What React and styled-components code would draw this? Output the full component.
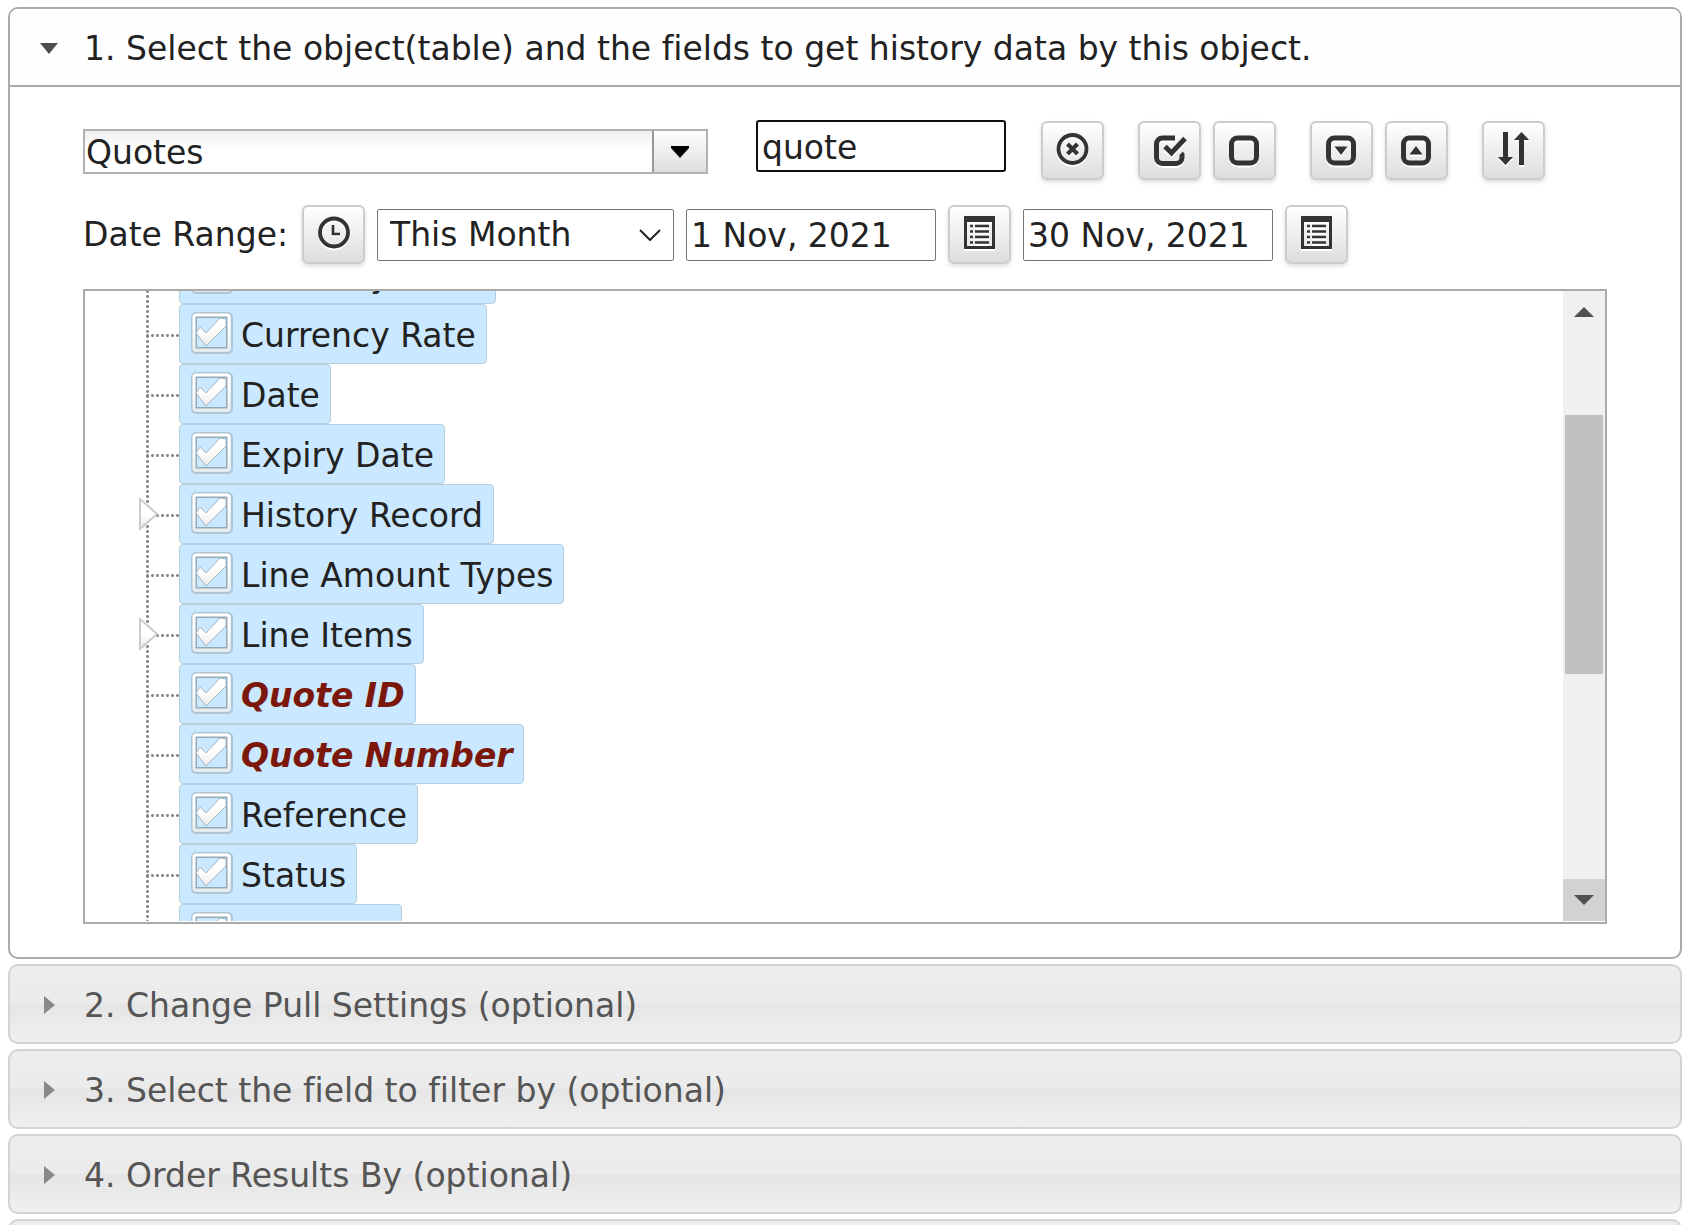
import { useLayoutEffect, useRef, useState } from "react";
import styled, { createGlobalStyle } from "styled-components";

const fields = [
  { label: "Currency Code" },
  { label: "Currency Rate" },
  { label: "Date" },
  { label: "Expiry Date" },
  { label: "History Record", nested: true },
  { label: "Line Amount Types" },
  { label: "Line Items", nested: true },
  { label: "Quote ID", isKey: true },
  { label: "Quote Number", isKey: true },
  { label: "Reference" },
  { label: "Status" },
  { label: "Sub Total" },
];

const closedSections = [
  "2. Change Pull Settings (optional)",
  "3. Select the field to filter by (optional)",
  "4. Order Results By (optional)",
  "5. Limit Results (optional)",
];

function ClearIcon() {
  return (
    <Icon viewBox="0 0 32 36">
      <circle cx="15.500" cy="16" r="14" fill="none" stroke="currentColor" strokeWidth="3.800" />
      <path d="M10.500 11l10 10M20.500 11l-10 10" stroke="currentColor" strokeWidth="4" />
    </Icon>
  );
}

function CheckAllIcon() {
  return (
    <Icon viewBox="0 0 32 36">
      <path
        d="M21 5H8.500a6 6 0 0 0-6 6v13.500a6 6 0 0 0 6 6H22a6 6 0 0 0 6-6v-3l-1-1"
        fill="none"
        stroke="currentColor"
        strokeWidth="5"
      />
      <path d="M11 13.500l6.500 6.500L31 5.500" fill="none" stroke="currentColor" strokeWidth="5" />
    </Icon>
  );
}

function BoxIcon({ arrow }) {
  return (
    <Icon viewBox="0 0 32 36">
      <rect x="2.500" y="5" width="25" height="25" rx="6" fill="none" stroke="currentColor" strokeWidth="5" />
      {arrow === "down" && <path d="M8.500 13.500h13L15 22z" fill="currentColor" />}
      {arrow === "up" && <path d="M8.500 21.500h13L15 13z" fill="currentColor" />}
    </Icon>
  );
}

function SortIcon() {
  return (
    <Icon viewBox="0 0 32 36">
      <path d="M5 -1h5v25h5l-7.500 8L0 24h5zM21 32h5V7h5l-7.500-8L16 7h5z" fill="currentColor" />
    </Icon>
  );
}

function ClockIcon() {
  return (
    <Icon viewBox="0 0 32 36">
      <circle cx="16" cy="15.500" r="14" fill="none" stroke="currentColor" strokeWidth="3.800" />
      <path d="M15 8v9h7" fill="none" stroke="currentColor" strokeWidth="2.600" />
    </Icon>
  );
}

function ListIcon() {
  return (
    <Icon viewBox="0 0 32 36">
      <path d="M0 -1h31v33H0zM3 5v24h25V5z" fill="currentColor" fillRule="evenodd" />
      <path d="M11 9h14M11 14.500h14M11 20h14M11 25.500h14" stroke="currentColor" strokeWidth="2.600" />
      <path d="M6 9h3M6 14.500h3M6 20h3M6 25.500h3" stroke="currentColor" strokeWidth="2.600" />
    </Icon>
  );
}

function Tick() {
  return (
    <TickArt viewBox="0 0 42 42" aria-hidden="true">
      <defs>
        <linearGradient id="tick" x1="0" y1="0" x2="0" y2="1">
          <stop offset="0.4" stopColor="#fff" />
          <stop offset="1" stopColor="#ececec" />
        </linearGradient>
      </defs>
      <rect x="1" y="1" width="40" height="40" rx="4" fill="none" stroke="#b0c4d2" strokeWidth="2" />
      <rect x="5" y="5" width="31" height="31" fill="none" stroke="#93a9b8" strokeWidth="2" />
      <rect x="3" y="3" width="35" height="35" rx="2" fill="none" stroke="url(#tick)" strokeWidth="3" />
      <path
        d="M5 21l4-6 6 6L29 6l6 1v7L15 34z"
        fill="url(#tick)"
        stroke="#a3b6c3"
        strokeWidth="1"
      />
    </TickArt>
  );
}

function Field({ label, nested, isKey }) {
  const [checked, setChecked] = useState(true);

  return (
    <Row>
      <Branch>
        {nested && (
          <Expander type="button" aria-label={`Expand ${label}`}>
            <svg width="22" height="34" viewBox="0 0 22 34">
              <defs>
                <linearGradient id="expander" x1="0" y1="0" x2="0" y2="1">
                  <stop offset="0.5" stopColor="#fff" />
                  <stop offset="1" stopColor="#e6e6e6" />
                </linearGradient>
              </defs>
              <path d="M2 2l17 15L2 32z" fill="url(#expander)" stroke="#ccc" strokeWidth="2" />
            </svg>
          </Expander>
        )}
      </Branch>
      <FieldLabel $isKey={isKey}>
        <TickBox>
          <input type="checkbox" checked={checked} onChange={() => setChecked(!checked)} />
          <Tick />
        </TickBox>
        <FieldName>{label}</FieldName>
      </FieldLabel>
    </Row>
  );
}

function FieldTree() {
  const viewport = useRef(null);

  // open with the first row mostly scrolled away
  useLayoutEffect(() => {
    viewport.current.scrollTop = 47;
  }, []);

  return (
    <TreeFrame>
      <TreeViewport ref={viewport}>
        <TreeList>
          {fields.map((field) => (
            <Field key={field.label} {...field} />
          ))}
        </TreeList>
      </TreeViewport>
      <ScrollBar>
        <ScrollButton type="button" aria-label="Scroll up">
          <svg width="20" height="10" viewBox="0 0 20 10">
            <path d="M0 10L10 0l10 10z" fill="#505050" />
          </svg>
        </ScrollButton>
        <ScrollTrack>
          <ScrollThumb />
        </ScrollTrack>
        <ScrollButton type="button" aria-label="Scroll down" $pressed>
          <svg width="20" height="10" viewBox="0 0 20 10">
            <path d="M0 0l10 10L20 0z" fill="#505050" />
          </svg>
        </ScrollButton>
      </ScrollBar>
    </TreeFrame>
  );
}

function App() {
  const [object, setObject] = useState("Quotes");
  const [search, setSearch] = useState("quote");
  const [from, setFrom] = useState("1 Nov, 2021");
  const [to, setTo] = useState("30 Nov, 2021");

  return (
    <>
      <GlobalStyle />
      <Accordion>
        <OpenSection>
          <OpenHeader type="button">
            <Marker>
              <svg width="18" height="11" viewBox="0 0 18 11">
                <path d="M0 0h18L9 11z" fill="#4d4d4d" />
              </svg>
            </Marker>
            1. Select the object(table) and the fields to get history data by this object.
          </OpenHeader>
          <Content>
            <Toolbar>
              <Combo>
                <ComboInput
                  aria-label="Object"
                  value={object}
                  onChange={(e) => setObject(e.target.value)}
                />
                <ComboButton type="button" aria-label="Show objects">
                  <svg width="18" height="12" viewBox="0 0 18 12">
                    <path d="M0 0h18v2L9 12 0 2z" fill="#000" />
                  </svg>
                </ComboButton>
              </Combo>
              <SearchInput
                aria-label="Search fields"
                value={search}
                onChange={(e) => setSearch(e.target.value)}
              />
              <Tools>
                <ToolButton type="button" aria-label="Clear search">
                  <ClearIcon />
                </ToolButton>
                <ToolGroup>
                  <ToolButton type="button" aria-label="Check all">
                    <CheckAllIcon />
                  </ToolButton>
                  <ToolButton type="button" aria-label="Uncheck all">
                    <BoxIcon />
                  </ToolButton>
                </ToolGroup>
                <ToolGroup>
                  <ToolButton type="button" aria-label="Expand all">
                    <BoxIcon arrow="down" />
                  </ToolButton>
                  <ToolButton type="button" aria-label="Collapse all">
                    <BoxIcon arrow="up" />
                  </ToolButton>
                </ToolGroup>
                <ToolButton type="button" aria-label="Sort">
                  <SortIcon />
                </ToolButton>
              </Tools>
            </Toolbar>
            <DateRow>
              <DateLabel htmlFor="range">Date Range:</DateLabel>
              <ToolButton type="button" aria-label="Time">
                <ClockIcon />
              </ToolButton>
              <SelectWrap>
                <RangeSelect id="range" defaultValue="This Month">
                  <option>This Month</option>
                </RangeSelect>
                <Chevron width="22" height="12" viewBox="0 0 22 12">
                  <path d="M1 1l10 10L21 1" fill="none" stroke="#222" strokeWidth="2" />
                </Chevron>
              </SelectWrap>
              <TextInput aria-label="From" value={from} onChange={(e) => setFrom(e.target.value)} />
              <ToolButton type="button" aria-label="Pick start date">
                <ListIcon />
              </ToolButton>
              <TextInput aria-label="To" value={to} onChange={(e) => setTo(e.target.value)} />
              <ToolButton type="button" aria-label="Pick end date">
                <ListIcon />
              </ToolButton>
            </DateRow>
            <FieldTree />
          </Content>
        </OpenSection>
        {closedSections.map((title) => (
          <ClosedHeader type="button" key={title}>
            <Marker>
              <svg width="11" height="18" viewBox="0 0 11 18">
                <path d="M0 0l11 9L0 18z" fill="#888" />
              </svg>
            </Marker>
            {title}
          </ClosedHeader>
        ))}
      </Accordion>
    </>
  );
}

const GlobalStyle = createGlobalStyle`
  * {
    box-sizing: border-box;
  }
  html {
    scrollbar-width: none;
  }
  body {
    margin: 0;
    background: #fff;
    color: #222;
  }
  body, button, input, select {
    font-family: Verdana, "DejaVu Sans", sans-serif;
    font-size: 33px;
    font-variant-ligatures: none;
  }
  button, input, select {
    color: inherit;
    margin: 0;
  }
`;

const Accordion = styled.main`
  display: flex;
  flex-direction: column;
  gap: 5px;
  padding: 7px 6px 0 8px;
`;

const OpenSection = styled.section`
  border: 2px solid #aaa;
  border-radius: 10px;
`;

const Header = styled.button`
  display: flex;
  align-items: center;
  width: 100%;
  padding: 2px 0 0;
  text-align: left;
  white-space: nowrap;
`;

const OpenHeader = styled(Header)`
  height: 78px;
  border: 0;
  border-bottom: 2px solid #aaa;
  border-radius: 8px 8px 0 0;
  background: #fefefe;
`;

const ClosedHeader = styled(Header)`
  height: 80px;
  border: 2px solid #d3d3d3;
  border-radius: 10px;
  color: #555;
  background: linear-gradient(#ededed 0%, #ebebeb 49%, #e5e5e5 51%, #f0f0f0 100%);
`;

const Marker = styled.span`
  display: flex;
  justify-content: center;
  width: 74px;
  padding-left: 4px;
  flex-shrink: 0;
`;

const Content = styled.div`
  padding: 33px 73px 33px;
`;

const Toolbar = styled.div`
  display: flex;
  align-items: flex-start;
`;

const Combo = styled.div`
  display: flex;
  width: 625px;
  height: 45px;
  margin-top: 9px;
  border: 2px solid #b2b2b2;
`;

const ComboInput = styled.input`
  flex: 1;
  min-width: 0;
  padding: 1px 1px 0;
  border: 0;
  outline: 0;
  background: linear-gradient(#eee, #fff 40%);
`;

const ComboButton = styled.button`
  display: flex;
  align-items: center;
  justify-content: center;
  width: 54px;
  padding: 0;
  border: 0;
  border-left: 2px solid #999;
  background: linear-gradient(#fff, #ddd);
`;

const TextInput = styled.input`
  width: 250px;
  height: 52px;
  padding: 2px 4px 0;
  border: 1px solid #767676;
  border-radius: 2px;
  background: #fff;
  outline: 0;
`;

const SearchInput = styled(TextInput)`
  margin-left: 48px;
  border: 2px solid #101010;
  border-radius: 3px;
`;

const Tools = styled.div`
  display: flex;
  gap: 34px;
  margin: 1px 0 0 35px;
`;

const ToolGroup = styled.div`
  display: flex;
  gap: 12px;
`;

const ToolButton = styled.button`
  display: flex;
  align-items: center;
  justify-content: center;
  width: 63px;
  height: 59px;
  padding: 0;
  border: 2px solid #ccc;
  border-radius: 6px;
  color: #333;
  background: linear-gradient(#fff, #ddd);
  box-shadow: 0 2px 4px rgba(0, 0, 0, 0.15);
`;

const Icon = styled.svg`
  width: 32px;
  height: 36px;
  overflow: visible;
  filter: drop-shadow(0 2px 0 #fff);
`;

const DateRow = styled.div`
  display: flex;
  align-items: center;
  gap: 12px;
  margin-top: 25px;
`;

const DateLabel = styled.label`
  width: 207px;
  white-space: nowrap;
`;

const SelectWrap = styled.div`
  display: grid;
  align-items: center;
  width: 297px;
  > * {
    grid-area: 1 / 1;
  }
`;

const RangeSelect = styled.select`
  appearance: none;
  height: 52px;
  padding: 0 12px;
  border: 1px solid #767676;
  border-radius: 2px;
  background: #fff;
`;

const Chevron = styled.svg`
  justify-self: end;
  margin-right: 13px;
  pointer-events: none;
`;

const TreeFrame = styled.div`
  display: flex;
  height: 635px;
  margin-top: 25px;
  padding-bottom: 1px;
  border: 2px solid #aaa;
`;

const TreeViewport = styled.div`
  flex: 1;
  overflow-y: scroll;
  scrollbar-width: none;
`;

const TreeList = styled.ul`
  margin: 0 0 0 60px;
  padding: 0;
  list-style: none;
  background: radial-gradient(circle, #888 1px, transparent 2px) 0 0 / 5px 5px repeat-y;
`;

const Row = styled.li`
  display: flex;
  height: 60px;
`;

const Branch = styled.span`
  display: flex;
  align-items: center;
  width: 34px;
  background: radial-gradient(circle, #888 1px, transparent 2px) 0 29px / 5px 5px repeat-x;
`;

const Expander = styled.button`
  display: flex;
  margin-left: -7px;
  padding: 0;
  border: 0;
  background: none;
`;

const FieldLabel = styled.label`
  display: flex;
  align-items: flex-start;
  gap: 8px;
  padding: 7px 10px 0 11px;
  border: 1px solid #b9cfdd;
  border-radius: 4px;
  background: #cae8ff;
  white-space: nowrap;
  color: ${({ $isKey }) => ($isKey ? "#7b170b" : "#222")};
  font-weight: ${({ $isKey }) => ($isKey ? "bold" : "normal")};
  font-style: ${({ $isKey }) => ($isKey ? "italic" : "normal")};
`;

const FieldName = styled.span`
  line-height: 48px;
`;

const TickBox = styled.span`
  display: grid;
  width: 42px;
  height: 42px;
  > * {
    grid-area: 1 / 1;
  }
  input {
    appearance: none;
    width: 42px;
    height: 42px;
    margin: 0;
  }
  input:not(:checked) + svg path {
    display: none;
  }
`;

const TickArt = styled.svg`
  width: 42px;
  height: 42px;
  pointer-events: none;
`;

const ScrollBar = styled.div`
  display: flex;
  flex-direction: column;
  width: 42px;
  background: #f0f0f0;
`;

const ScrollButton = styled.button`
  display: flex;
  align-items: center;
  justify-content: center;
  height: 42px;
  padding: 0;
  border: 0;
  background: ${({ $pressed }) => ($pressed ? "#d2d2d2" : "#f0f0f0")};
`;

const ScrollTrack = styled.div`
  flex: 1;
  padding: 82px 2px 0;
`;

const ScrollThumb = styled.div`
  height: 259px;
  background: #c1c1c1;
`;

export default App;
